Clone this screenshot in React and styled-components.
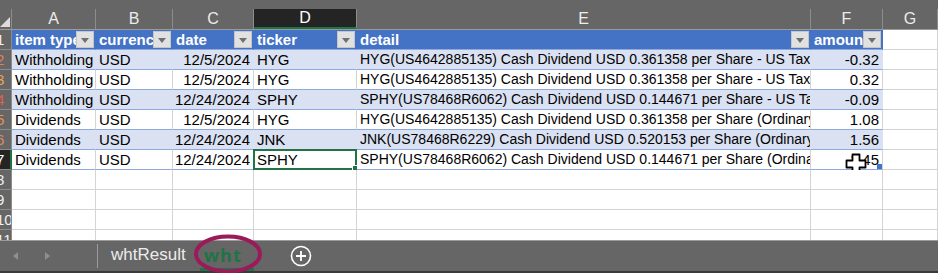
import React from 'react';
import styled, { createGlobalStyle } from 'styled-components';

const GlobalStyle = createGlobalStyle`
  html, body {
    margin: 0;
    padding: 0;
    background: #ffffff;
  }
  body {
    width: 938px;
    height: 273px;
    overflow: hidden;
    font-family: "Liberation Sans", Arial, sans-serif;
  }
`;

const COLS = '12px 84px 77px 81px 103px 454px 72px 1fr';

const Window = styled.div`
  width: 938px;
  height: 273px;
  display: flex;
  flex-direction: column;
  overflow: hidden;
`;

const Sheet = styled.div`
  height: 240px;
  overflow: hidden;
  display: flex;
  flex-direction: column;
  flex-shrink: 0;
`;

const TopStrip = styled.div`
  height: 9px;
  background: #666666;
  flex-shrink: 0;
`;

const HeaderRow = styled.div`
  display: grid;
  grid-template-columns: ${COLS};
  height: 20px;
  flex-shrink: 0;
  background: #666666;
  border-bottom: 1px solid #9a9a9a;
  box-sizing: content-box;
`;

const Corner = styled.div`
  position: relative;
  border-right: 1px solid #8c8c8c;
  &::after {
    content: '';
    position: absolute;
    right: 1px;
    bottom: 2px;
    width: 0;
    height: 0;
    border-left: 10px solid transparent;
    border-bottom: 10px solid #dcdcdc;
  }
`;

const ColLetter = styled.div`
  display: flex;
  align-items: center;
  justify-content: center;
  color: ${(p) => (p.$active ? '#ffffff' : '#ececec')};
  background: ${(p) => (p.$active ? '#242424' : 'transparent')};
  border-right: 1px solid #8c8c8c;
  border-bottom: ${(p) => (p.$active ? '2px solid #217346' : '0')};
  font-size: 16px;
  box-sizing: border-box;
`;

const Row = styled.div`
  display: grid;
  grid-template-columns: ${COLS};
  height: 20px;
  flex-shrink: 0;
`;

const RowNum = styled.div`
  background: ${(p) => (p.$active ? '#242424' : '#666666')};
  border-right: ${(p) => (p.$active ? '2px solid #217346' : '1px solid #8c8c8c')};
  border-bottom: 1px solid #8c8c8c;
  color: ${(p) => p.$color};
  font-size: 15px;
  overflow: hidden;
  box-sizing: border-box;
  display: flex;
  align-items: center;
  span {
    margin-left: -4px;
  }
`;

const Cell = styled.div`
  position: relative;
  box-sizing: border-box;
  background: ${(p) => (p.$head ? '#4472c4' : p.$band ? '#d9e1f2' : '#ffffff')};
  color: ${(p) => (p.$head ? '#ffffff' : '#000000')};
  font-weight: ${(p) => (p.$head ? 700 : 400)};
  font-size: ${(p) => (p.$narrow ? '14px' : '15px')};
  white-space: nowrap;
  overflow: hidden;
  text-align: ${(p) => p.$align || 'left'};
  padding: ${(p) => (p.$align === 'right' ? '0 3px 0 0' : '0 0 0 3px')};
  line-height: 19px;
  border-right: 1px solid
    ${(p) => (p.$head || p.$band ? 'transparent' : '#d4d4d4')};
  border-bottom: 1px solid ${(p) => (p.$table ? '#8ea9db' : '#d4d4d4')};
`;

const FilterButton = styled.span`
  position: absolute;
  right: 1px;
  top: 1px;
  width: 18px;
  height: 17px;
  background: #e1e1e1;
  border: 1px solid #c6c6c6;
  box-sizing: border-box;
  &::after {
    content: '';
    position: absolute;
    left: 4px;
    top: 6px;
    border-left: 4px solid transparent;
    border-right: 4px solid transparent;
    border-top: 5px solid #707070;
  }
`;

const Selection = styled.span`
  position: absolute;
  left: -1px;
  top: -1px;
  right: -1px;
  bottom: -1px;
  border: 2px solid #217346;
  pointer-events: none;
  &::after {
    content: '';
    position: absolute;
    right: -4px;
    bottom: -4px;
    width: 5px;
    height: 5px;
    background: #217346;
    border: 1px solid #ffffff;
  }
`;

const ResizeHandle = styled.span`
  position: absolute;
  right: 0;
  bottom: 0;
  width: 5px;
  height: 5px;
  background: #4472c4;
`;

const Cursor = styled.svg`
  position: absolute;
  left: 34px;
  top: 3px;
`;

const TabBar = styled.div`
  position: relative;
  flex: 1;
  background: #666666;
  border-top: 1px solid #9a9a9a;
  border-bottom: 2px solid #3a3a3a;
  display: flex;
  align-items: center;
`;

const NavArrows = styled.div`
  display: flex;
  align-items: center;
  gap: 27px;
  padding-left: 13px;
  width: 98px;
  height: 24px;
  border-right: 1px solid #9a9a9a;
  box-sizing: border-box;
`;

const Arrow = styled.span`
  width: 0;
  height: 0;
  border-top: 4px solid transparent;
  border-bottom: 4px solid transparent;
  ${(p) =>
    p.$dir === 'left'
      ? 'border-right: 5px solid #8f8f8f;'
      : 'border-left: 5px solid #8f8f8f;'}
`;

const Tab = styled.div`
  position: relative;
  height: 100%;
  display: flex;
  align-items: center;
  box-sizing: border-box;
  font-size: ${(p) => (p.$active ? '18px' : '17px')};
  color: ${(p) => (p.$active ? '#217346' : '#ececec')};
  font-weight: ${(p) => (p.$active ? 700 : 400)};
  font-family: ${(p) =>
    p.$active ? '"Open Sans", sans-serif' : '"Liberation Sans", sans-serif'};
  letter-spacing: ${(p) => (p.$active ? '1px' : '0')};
  padding: ${(p) => (p.$active ? '1px 12px 0 4px' : '0 0 3px 0')};
  margin-left: ${(p) => (p.$active ? '14px' : '13px')};
  border-bottom: ${(p) => (p.$active ? '3px solid #217346' : '0')};
`;

const AddSheet = styled.svg`
  margin-left: 36px;
`;

const Circle = styled.svg`
  position: absolute;
  left: 192px;
  top: -9px;
  pointer-events: none;
`;

const headers = ['item type', 'currency', 'date', 'ticker', 'detail', 'amount'];

const rows = [
  ['Withholding', 'USD', '12/5/2024', 'HYG', 'HYG(US4642885135) Cash Dividend USD 0.361358 per Share - US Tax', '-0.32'],
  ['Withholding', 'USD', '12/5/2024', 'HYG', 'HYG(US4642885135) Cash Dividend USD 0.361358 per Share - US Tax', '0.32'],
  ['Withholding', 'USD', '12/24/2024', 'SPHY', 'SPHY(US78468R6062) Cash Dividend USD 0.144671 per Share - US Tax', '-0.09'],
  ['Dividends', 'USD', '12/5/2024', 'HYG', 'HYG(US4642885135) Cash Dividend USD 0.361358 per Share (Ordinary Dividend)', '1.08'],
  ['Dividends', 'USD', '12/24/2024', 'JNK', 'JNK(US78468R6229) Cash Dividend USD 0.520153 per Share (Ordinary Dividend)', '1.56'],
  ['Dividends', 'USD', '12/24/2024', 'SPHY', 'SPHY(US78468R6062) Cash Dividend USD 0.144671 per Share (Ordinary Dividend)', '1.45'],
];

const rowNumColors = ['#e0805a', '#e8a05a', '#e06050', '#e89050', '#e08a5a', '#ffffff'];

function App() {
  return (
    <Window>
      <GlobalStyle />
      <Sheet>
        <TopStrip />
        <HeaderRow>
          <Corner />
          {['A', 'B', 'C', 'D', 'E', 'F', 'G'].map((c) => (
            <ColLetter key={c} $active={c === 'D'}>
              {c}
            </ColLetter>
          ))}
        </HeaderRow>

        <Row>
          <RowNum $color="#f0f0f0">
            <span>1</span>
          </RowNum>
          {headers.map((h) => (
            <Cell key={h} $head $table>
              {h}
              <FilterButton />
            </Cell>
          ))}
          <Cell />
        </Row>

        {rows.map((r, i) => {
          const band = i % 2 === 0;
          const last = i === rows.length - 1;
          return (
            <Row key={i}>
              <RowNum $active={last} $color={rowNumColors[i]}>
                <span>{i + 2}</span>
              </RowNum>
              <Cell $band={band} $table>{r[0]}</Cell>
              <Cell $band={band} $table>{r[1]}</Cell>
              <Cell $band={band} $table $align="right">{r[2]}</Cell>
              <Cell $band={band} $table style={last ? { overflow: 'visible' } : undefined}>
                {r[3]}
                {last && <Selection />}
              </Cell>
              <Cell $band={band} $table $narrow>{r[4]}</Cell>
              <Cell $band={band} $table $align="right" style={last ? { overflow: 'visible' } : undefined}>
                {r[5]}
                {last && <ResizeHandle />}
                {last && (
                  <Cursor width="22" height="22" viewBox="0 0 22 22">
                    <path
                      d="M7.5 1.5 h7 v6 h6 v7 h-6 v6 h-7 v-6 h-6 v-7 h6 z"
                      fill="#ffffff"
                      stroke="#000000"
                      strokeWidth="1.8"
                      strokeLinejoin="round"
                    />
                  </Cursor>
                )}
              </Cell>
              <Cell />
            </Row>
          );
        })}

        {[8, 9, 10, 11].map((n) => (
          <Row key={n}>
            <RowNum $color="#f0f0f0">
              <span>{n}</span>
            </RowNum>
            {Array.from({ length: 7 }).map((_, j) => (
              <Cell key={j} />
            ))}
          </Row>
        ))}
      </Sheet>

      <TabBar>
        <NavArrows>
          <Arrow $dir="left" />
          <Arrow $dir="right" />
        </NavArrows>
        <Tab>whtResult</Tab>
        <Tab $active>wht</Tab>
        <AddSheet width="22" height="22" viewBox="0 0 22 22">
          <circle cx="11" cy="11" r="9.5" fill="none" stroke="#ffffff" strokeWidth="1.6" />
          <path d="M11 6 v10 M6 11 h10" stroke="#ffffff" strokeWidth="1.8" />
        </AddSheet>
        <Circle width="72" height="44" viewBox="0 0 72 44">
          <ellipse cx="36" cy="22" rx="32" ry="17.5" fill="none" stroke="#9c1a5a" strokeWidth="4" />
        </Circle>
      </TabBar>
    </Window>
  );
}

export default App;
